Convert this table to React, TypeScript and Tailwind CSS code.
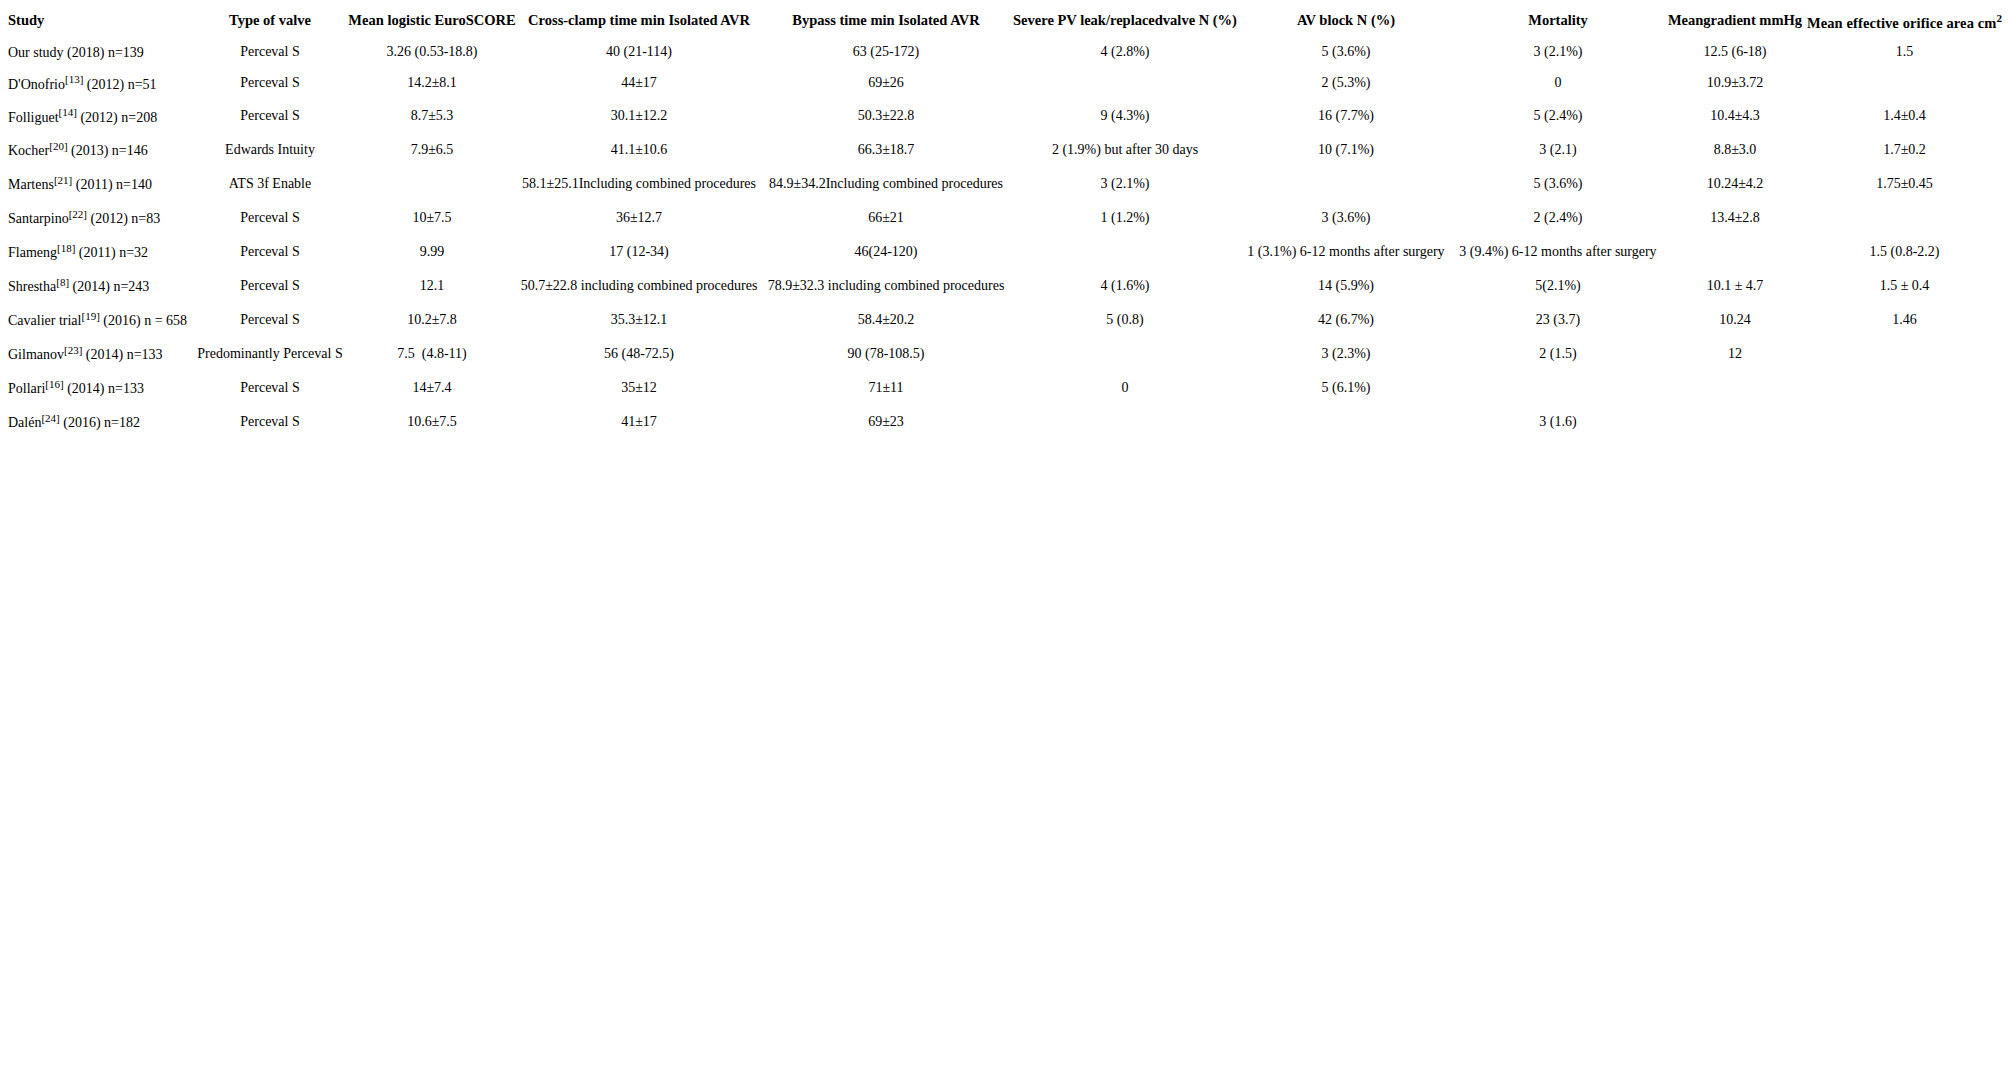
import React from 'react';

type Row = {
  study: React.ReactNode;
  h: string;
  cells: string[];
};

const Ref = ({ n }: { n: string }) => <sup className="text-[11px]">[{n}]</sup>;

const headers = [
  'Type of valve',
  'Mean logistic EuroSCORE',
  'Cross-clamp time min Isolated AVR',
  'Bypass time min Isolated AVR',
  'Severe PV leak/replacedvalve N (%)',
  'AV block N (%)',
  'Mortality',
  'Meangradient mmHg',
];

const rows: Row[] = [
  {
    study: <>Our study (2018) n=139</>,
    h: 'h-[30px]',
    cells: ['Perceval S', '3.26 (0.53-18.8)', '40 (21-114)', '63 (25-172)', '4 (2.8%)', '5 (3.6%)', '3 (2.1%)', '12.5 (6-18)', '1.5'],
  },
  {
    study: <>D'Onofrio<Ref n="13" /> (2012) n=51</>,
    h: 'h-[33px]',
    cells: ['Perceval S', '14.2±8.1', '44±17', '69±26', '', '2 (5.3%)', '0', '10.9±3.72', ''],
  },
  {
    study: <>Folliguet<Ref n="14" /> (2012) n=208</>,
    h: 'h-[33px]',
    cells: ['Perceval S', '8.7±5.3', '30.1±12.2', '50.3±22.8', '9 (4.3%)', '16 (7.7%)', '5 (2.4%)', '10.4±4.3', '1.4±0.4'],
  },
  {
    study: <>Kocher<Ref n="20" /> (2013) n=146</>,
    h: 'h-[34px]',
    cells: ['Edwards Intuity', '7.9±6.5', '41.1±10.6', '66.3±18.7', '2 (1.9%) but after 30 days', '10 (7.1%)', '3 (2.1)', '8.8±3.0', '1.7±0.2'],
  },
  {
    study: <>Martens<Ref n="21" /> (2011) n=140</>,
    h: 'h-[34px]',
    cells: ['ATS 3f Enable', '', '58.1±25.1Including combined procedures', '84.9±34.2Including combined procedures', '3 (2.1%)', '', '5 (3.6%)', '10.24±4.2', '1.75±0.45'],
  },
  {
    study: <>Santarpino<Ref n="22" /> (2012) n=83</>,
    h: 'h-[34px]',
    cells: ['Perceval S', '10±7.5', '36±12.7', '66±21', '1 (1.2%)', '3 (3.6%)', '2 (2.4%)', '13.4±2.8', ''],
  },
  {
    study: <>Flameng<Ref n="18" /> (2011) n=32</>,
    h: 'h-[34px]',
    cells: ['Perceval S', '9.99', '17 (12-34)', '46(24-120)', '', '1 (3.1%) 6-12 months after surgery', '3 (9.4%) 6-12 months after surgery', '', '1.5 (0.8-2.2)'],
  },
  {
    study: <>Shrestha<Ref n="8" /> (2014) n=243</>,
    h: 'h-[34px]',
    cells: ['Perceval S', '12.1', '50.7±22.8 including combined procedures', '78.9±32.3 including combined procedures', '4 (1.6%)', '14 (5.9%)', '5(2.1%)', '10.1 ± 4.7', '1.5 ± 0.4'],
  },
  {
    study: <>Cavalier trial<Ref n="19" /> (2016) n = 658</>,
    h: 'h-[34px]',
    cells: ['Perceval S', '10.2±7.8', '35.3±12.1', '58.4±20.2', '5 (0.8)', '42 (6.7%)', '23 (3.7)', '10.24', '1.46'],
  },
  {
    study: <>Gilmanov<Ref n="23" /> (2014) n=133</>,
    h: 'h-[34px]',
    cells: ['Predominantly Perceval S', '7.5\u00a0\u00a0(4.8-11)', '56 (48-72.5)', '90 (78-108.5)', '', '3 (2.3%)', '2 (1.5)', '12', ''],
  },
  {
    study: <>Pollari<Ref n="16" /> (2014) n=133</>,
    h: 'h-[34px]',
    cells: ['Perceval S', '14±7.4', '35±12', '71±11', '0', '5 (6.1%)', '', '', ''],
  },
  {
    study: <>Dalén<Ref n="24" /> (2016) n=182</>,
    h: 'h-[34px]',
    cells: ['Perceval S', '10.6±7.5', '41±17', '69±23', '', '', '3 (1.6)', '', ''],
  },
];

export default function App() {
  return (
    <div className="min-h-screen bg-white pt-[5px] pl-[6px] text-black font-['Liberation_Serif',_'Times_New_Roman',_serif] text-[14px]">
      <table className="table-fixed w-[1997px]">
        <colgroup>
          <col className="w-[186px]" />
          <col className="w-[156px]" />
          <col className="w-[168px]" />
          <col className="w-[246px]" />
          <col className="w-[248px]" />
          <col className="w-[230px]" />
          <col className="w-[212px]" />
          <col className="w-[212px]" />
          <col className="w-[142px]" />
          <col className="w-[197px]" />
        </colgroup>
        <thead>
          <tr className="h-[31px] text-[14.5px]">
            <th className="text-left font-bold pl-[2px] whitespace-nowrap align-middle">Study</th>
            {headers.map((h) => (
              <th key={h} className="text-center font-bold whitespace-nowrap align-middle">
                {h}
              </th>
            ))}
            <th className="text-center font-bold whitespace-nowrap align-middle pt-[6px] tracking-[0.1px]">
              Mean effective orifice area cm<sup className="text-[11px]">2</sup>
            </th>
          </tr>
        </thead>
        <tbody>
          {rows.map((r, i) => (
            <tr key={i} className={r.h}>
              <td className="text-left pl-[2px] whitespace-nowrap align-middle pt-[3px]">{r.study}</td>
              {r.cells.map((c, j) => (
                <td key={j} className="text-center whitespace-nowrap align-middle">
                  {c}
                </td>
              ))}
            </tr>
          ))}
        </tbody>
      </table>
    </div>
  );
}
